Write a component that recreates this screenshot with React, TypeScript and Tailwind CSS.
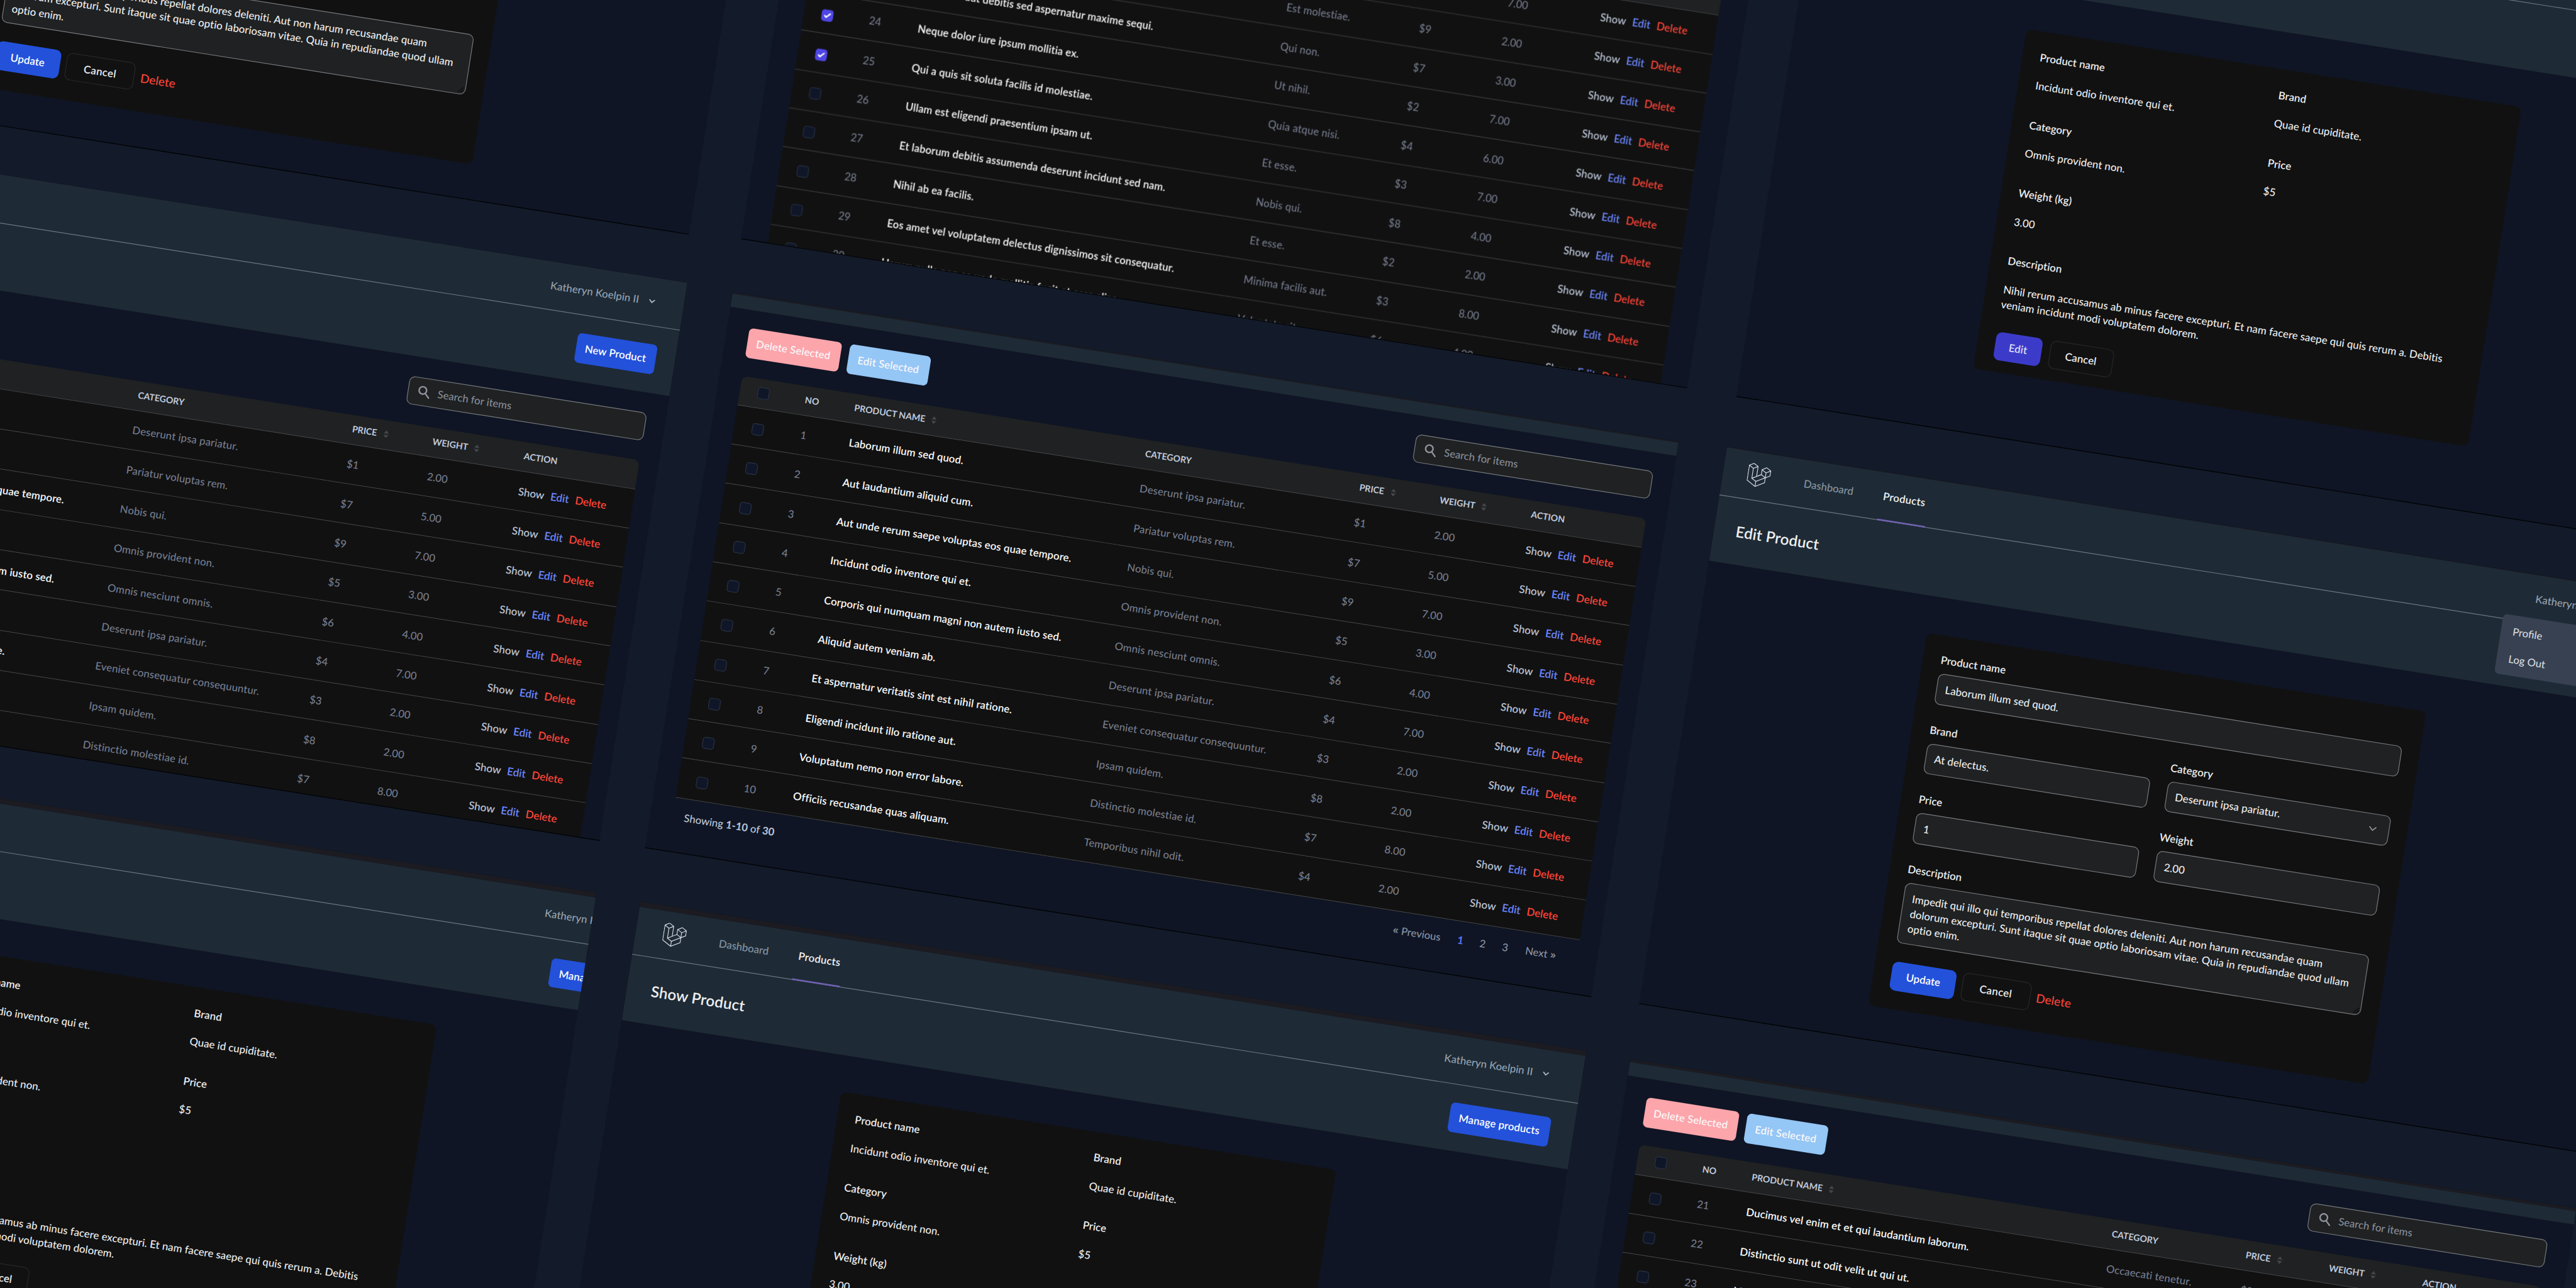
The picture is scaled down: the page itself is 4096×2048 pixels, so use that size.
import type { ReactNode } from "react";

type Product = {
  no: number;
  name: string;
  category: string;
  price: string;
  weight: string;
  checked?: boolean;
};

const firstPage: Product[] = [
  { no: 1, name: "Laborum illum sed quod.", category: "Deserunt ipsa pariatur.", price: "$1", weight: "2.00" },
  { no: 2, name: "Aut laudantium aliquid cum.", category: "Pariatur voluptas rem.", price: "$7", weight: "5.00" },
  { no: 3, name: "Aut unde rerum saepe voluptas eos quae tempore.", category: "Nobis qui.", price: "$9", weight: "7.00" },
  { no: 4, name: "Incidunt odio inventore qui et.", category: "Omnis provident non.", price: "$5", weight: "3.00" },
  { no: 5, name: "Corporis qui numquam magni non autem iusto sed.", category: "Omnis nesciunt omnis.", price: "$6", weight: "4.00" },
  { no: 6, name: "Aliquid autem veniam ab.", category: "Deserunt ipsa pariatur.", price: "$4", weight: "7.00" },
  { no: 7, name: "Et aspernatur veritatis sint est nihil ratione.", category: "Eveniet consequatur consequuntur.", price: "$3", weight: "2.00" },
  { no: 8, name: "Eligendi incidunt illo ratione aut.", category: "Ipsam quidem.", price: "$8", weight: "2.00" },
  { no: 9, name: "Voluptatum nemo non error labore.", category: "Distinctio molestiae id.", price: "$7", weight: "8.00" },
  { no: 10, name: "Officiis recusandae quas aliquam.", category: "Temporibus nihil odit.", price: "$4", weight: "2.00" },
];

const lastPage: Product[] = [
  { no: 21, name: "Ducimus vel enim et et qui laudantium laborum.", category: "Occaecati tenetur.", price: "$9", weight: "7.00" },
  { no: 22, name: "Distinctio sunt ut odit velit ut qui ut.", category: "Est molestiae.", price: "$9", weight: "2.00" },
  { no: 23, name: "Veritatis aut debitis sed aspernatur maxime sequi.", category: "Qui non.", price: "$7", weight: "3.00" },
  { no: 24, name: "Neque dolor iure ipsum mollitia ex.", category: "Ut nihil.", price: "$2", weight: "7.00" },
  { no: 25, name: "Qui a quis sit soluta facilis id molestiae.", category: "Quia atque nisi.", price: "$4", weight: "6.00" },
  { no: 26, name: "Ullam est eligendi praesentium ipsam ut.", category: "Et esse.", price: "$3", weight: "7.00" },
  { no: 27, name: "Et laborum debitis assumenda deserunt incidunt sed nam.", category: "Nobis qui.", price: "$8", weight: "4.00" },
  { no: 28, name: "Nihil ab ea facilis.", category: "Et esse.", price: "$2", weight: "2.00" },
  { no: 29, name: "Eos amet vel voluptatem delectus dignissimos sit consequatur.", category: "Minima facilis aut.", price: "$3", weight: "8.00" },
  { no: 30, name: "Harum nulla non ea unde mollitia fugit et esse alias.", category: "Voluptate sit.", price: "$6", weight: "4.00" },
];

const selectedPage = lastPage.map((p) => ({ ...p, checked: p.no === 24 || p.no === 25 }));

function Logo() {
  return (
    <svg viewBox="0 0 50 52" className="h-[32px] w-[31px] fill-[#d5dbe4]">
      <path d="M49.626 11.564a.809.809 0 0 1 .028.209v10.972a.8.8 0 0 1-.402.694l-9.209 5.302V39.25c0 .286-.152.55-.4.694L20.42 51.01c-.044.025-.092.041-.14.058-.018.006-.035.017-.054.022a.805.805 0 0 1-.41 0c-.022-.006-.042-.018-.063-.026-.044-.016-.09-.03-.132-.054L.402 39.944A.801.801 0 0 1 0 39.25V6.334c0-.072.01-.142.028-.21.006-.023.02-.044.028-.067.015-.042.029-.085.051-.124.015-.026.037-.047.055-.071.023-.032.044-.065.071-.093.023-.023.053-.04.079-.06.029-.024.055-.05.088-.069h.001l9.61-5.533a.802.802 0 0 1 .8 0l9.61 5.533h.002c.032.02.059.045.088.068.026.02.055.038.078.06.028.029.048.062.072.094.017.024.04.045.054.071.023.04.036.082.052.124.008.023.022.044.028.068a.809.809 0 0 1 .028.209v20.559l8.008-4.611v-10.51c0-.07.01-.141.028-.208.007-.024.02-.045.028-.068.016-.042.03-.085.052-.124.015-.026.037-.047.054-.071.024-.032.044-.065.072-.093.023-.023.052-.04.078-.06.03-.024.056-.05.088-.069h.001l9.611-5.533a.801.801 0 0 1 .8 0l9.61 5.533c.034.02.06.045.09.068.025.02.054.038.077.06.028.029.048.062.072.094.018.024.04.045.054.071.023.039.036.082.052.124.009.023.022.044.028.068zm-1.574 10.718v-9.124l-3.363 1.936-4.646 2.675v9.124l8.01-4.611zm-9.61 16.505v-9.13l-4.57 2.61-13.05 7.448v9.216l17.62-10.144zM1.602 7.719v31.068L19.22 48.93v-9.214l-9.204-5.209-.003-.002-.004-.002c-.031-.018-.057-.044-.086-.066-.025-.02-.054-.036-.076-.058l-.002-.003c-.026-.025-.044-.056-.066-.084-.02-.027-.044-.05-.06-.078l-.001-.003c-.018-.03-.029-.066-.042-.1-.013-.03-.03-.058-.038-.09v-.001c-.01-.038-.012-.078-.016-.117-.004-.03-.012-.06-.012-.09v-.002-21.481L4.965 9.654 1.602 7.72zm8.81-5.994L2.405 6.334l8.005 4.609 8.006-4.61-8.006-4.608zm4.164 28.764l4.645-2.674V7.719l-3.363 1.936-4.646 2.675v20.096l3.364-1.937zM39.243 7.164l-8.006 4.609 8.006 4.609 8.005-4.61-8.005-4.608zm-.801 10.605l-4.646-2.675-3.363-1.936v9.124l4.645 2.674 3.364 1.937v-9.124zM20.02 38.33l11.743-6.704 5.87-3.35-8-4.606-9.211 5.303-8.395 4.833 7.993 4.524z" />
    </svg>
  );
}

function Chevron() {
  return (
    <svg viewBox="0 0 20 20" className="h-[16px] w-[16px] fill-[#a9b2bf]">
      <path
        fillRule="evenodd"
        clipRule="evenodd"
        d="M5.293 7.293a1 1 0 011.414 0L10 10.586l3.293-3.293a1 1 0 111.414 1.414l-4 4a1 1 0 01-1.414 0l-4-4a1 1 0 010-1.414z"
      />
    </svg>
  );
}

function SortIcon() {
  return (
    <svg viewBox="0 0 8 12" className="ml-[7.5px] h-[11.5px] w-[9px] fill-[#43464a]">
      <path d="M4 0.5 L7.6 5 H0.4 Z M4 11.5 L0.4 7 H7.6 Z" />
    </svg>
  );
}

function Checkbox({ checked }: { checked?: boolean }) {
  if (checked) {
    return (
      <div className="flex h-[16px] w-[16px] items-center justify-center rounded-[4px] bg-[#4f46e5]">
        <svg viewBox="0 0 16 16" className="h-[16px] w-[16px] fill-white">
          <path d="M12.207 4.793a1 1 0 010 1.414l-5 5a1 1 0 01-1.414 0l-2-2a1 1 0 011.414-1.414L6.5 9.086l4.293-4.293a1 1 0 011.414 0z" />
        </svg>
      </div>
    );
  }
  return <div className="h-[16px] w-[16px] rounded-[4px] border border-[#293245] bg-[#0f1627]" />;
}

const columnsFirst = "grid grid-cols-[89px_67px_395px_291px_109px_124px_1fr] items-center";
const columnsLast = "grid grid-cols-[89px_67px_489px_182px_113px_127px_1fr] items-center";

function ProductTable({ rows, columns }: { rows: Product[]; columns: string }) {
  return (
    <div className="flex flex-col overflow-hidden rounded-t-[8px]">
      <div className="h-[40.3px] border-b border-[#434446] bg-[#1f2122] text-[12px] font-bold text-[#c0c9dc]">
        <div className={columns + " h-full"}>
          <div className="pl-[24px]"><Checkbox /></div>
          <div>NO</div>
          <div className="flex items-center">PRODUCT NAME<SortIcon /></div>
          <div>CATEGORY</div>
          <div className="flex items-center">PRICE<SortIcon /></div>
          <div className="flex items-center">WEIGHT<SortIcon /></div>
          <div>ACTION</div>
        </div>
      </div>
      {rows.map((p) => (
        <div key={p.no} className="h-[53.3px] border-b border-[#434446] bg-[#111111] text-[#757c8e]">
          <div className={columns + " h-full"}>
            <div className="pt-[4px] pl-[24px]"><Checkbox checked={p.checked} /></div>
            <div className={p.no < 10 ? "pl-[1px]" : ""}>{p.no}</div>
            <div className="pt-[1px] text-[14.2px] font-semibold tracking-[0.1px] text-[#fafafa]">{p.name}</div>
            <div className="pt-[1px] tracking-[0.13px]">{p.category}</div>
            <div className="pt-[1px]">{p.price}</div>
            <div className="pt-[1px]">{p.weight}</div>
            <div className="flex gap-[8.5px] pt-[1.5px] text-[14.4px] font-semibold">
              <span className="text-[#b6bfcf]">Show</span>
              <span className="text-[#6b86fb]">Edit</span>
              <span className="text-[#fb4438]">Delete</span>
            </div>
          </div>
        </div>
      ))}
    </div>
  );
}

function TableToolbar({ bulk }: { bulk: boolean }) {
  return (
    <div className="mb-[24.5px] flex h-[40px] items-center">
      {bulk && (
        <div className="flex gap-[11px] text-[14px] font-semibold tracking-[0.2px] text-[#fbf6f7]">
          <div className="flex h-[40px] w-[126px] items-center justify-center rounded-[6px] bg-[#fca5ab]">Delete Selected</div>
          <div className="flex h-[40px] w-[110px] items-center justify-center rounded-[6px] bg-[#94c6f6]">Edit Selected</div>
        </div>
      )}
      <div className="ml-auto flex h-[37.5px] w-[322.5px] items-center rounded-[8px] border border-[#76797d] bg-[#1f2122] pl-[11px] text-[#868c98]">
        <svg viewBox="0 0 20 20" className="mr-[9px] h-[20px] w-[20px] fill-[#8e939d]">
          <path
            fillRule="evenodd"
            clipRule="evenodd"
            d="M8 4a4 4 0 100 8 4 4 0 000-8zM2 8a6 6 0 1110.89 3.476l4.817 4.817a1 1 0 01-1.414 1.414l-4.816-4.816A6 6 0 012 8z"
          />
        </svg>
        Search for items
      </div>
    </div>
  );
}

function Pagination() {
  return (
    <div className="flex h-[51px] items-center text-[#8a92a2]">
      <div className="ml-[16px] text-[#bcc5d8]">
        Showing <b className="font-bold">1-10</b> of <b className="font-bold">30</b>
      </div>
      <div className="ml-auto mr-[27px] flex items-center">
        <span className="w-[77px]">
          <span className="font-['Figtree','Open_Sans',sans-serif]">«</span> Previous
        </span>
        <span className="w-[30px] text-center font-bold text-[#5b78f5]">1</span>
        <span className="w-[30px] text-center">2</span>
        <span className="w-[31px] text-center">3</span>
        <span className="ml-[12px] w-[43px] whitespace-nowrap">
          Next <span className="font-['Figtree','Open_Sans',sans-serif]">»</span>
        </span>
      </div>
    </div>
  );
}

function Header({ title, action, inset }: { title: string; action?: ReactNode; inset: string }) {
  return (
    <div className="flex flex-col bg-[#1e2a35]">
      <div className="h-[64.5px] border-b border-[#6b7782]">
        <div className={"flex h-full items-center " + inset}>
          <div className="-mt-[2px] ml-[4.5px]"><Logo /></div>
          <div className="ml-[45.5px] w-[104px] text-[#8795a3]">Dashboard</div>
          <div className="-mb-[2.5px] flex h-full w-[65px] items-center justify-center border-b-2 border-[#6f61b4] font-semibold tracking-[0.2px] text-[#f1f3f5]">
            Products
          </div>
          <div className="ml-auto mr-[8.5px] flex items-center gap-[9.5px] text-[#98a3b0]">
            <span className="whitespace-nowrap tracking-[0.05px]">Katheryn Koelpin II</span>
            <Chevron />
          </div>
        </div>
      </div>
      <div className="h-[89px]">
        <div className={"flex h-full items-center justify-between " + inset}>
          <div className="ml-[1px] text-[20.4px] font-semibold tracking-[0.1px] text-[#eceef0]">{title}</div>
          {action}
        </div>
      </div>
    </div>
  );
}

function Screen({ className, children }: { className: string; children: ReactNode }) {
  return (
    <div className={"flex shrink-0 flex-col overflow-hidden border-b border-black bg-[#0f1524] " + className}>
      {children}
    </div>
  );
}

function Field({ label, value }: { label: string; value: string }) {
  return (
    <div className="flex h-[92.3px] flex-col gap-[18.5px]">
      <div className="leading-[20px] font-semibold">{label}</div>
      <div className="leading-[20px]">{value}</div>
    </div>
  );
}

function ShowCard() {
  return (
    <div className="flex h-[460.5px] w-[672px] flex-col rounded-[8px] bg-[#111111] px-[24px] pt-[24.5px] text-[14.2px] tracking-[0.05px] text-[#ededee]">
      <div className="grid grid-cols-[324px_1fr]">
        <Field label="Product name" value="Incidunt odio inventore qui et." />
        <Field label="Brand" value="Quae id cupiditate." />
        <Field label="Category" value="Omnis provident non." />
        <Field label="Price" value="$5" />
        <Field label="Weight (kg)" value="3.00" />
      </div>
      <div className="leading-[20px] font-semibold">Description</div>
      <div className="mt-[18.5px] whitespace-nowrap leading-[20.6px]">
        Nihil rerum accusamus ab minus facere excepturi. Et nam facere saepe qui quis rerum a. Debitis
        <br />
        veniam incidunt modi voluptatem dolorem.
      </div>
      <div className="mt-[26px] flex gap-[10.5px] font-semibold">
        <div className="flex h-[38px] w-[63.5px] items-center justify-center rounded-[8px] bg-[#3c3bc9] text-[#dcdcf6]">Edit</div>
        <div className="flex h-[37.5px] w-[86px] items-center justify-center rounded-[8px] border border-[#262728]">Cancel</div>
      </div>
    </div>
  );
}

function Input({ label, value, select }: { label: string; value: string; select?: boolean }) {
  return (
    <div className="flex flex-col">
      <div className="leading-[20px] font-semibold">{label}</div>
      <div className="mt-[8px] flex h-[41.5px] items-center justify-between rounded-[8px] border border-[#76797d] bg-[#1f2122] px-[11px]">
        {value}
        {select && (
          <svg viewBox="0 0 20 20" className="h-[21px] w-[21px] fill-none stroke-[#8b8f96] stroke-[1.5]">
            <path strokeLinecap="round" strokeLinejoin="round" d="M6 8l4 4 4-4" />
          </svg>
        )}
      </div>
    </div>
  );
}

function EditCard() {
  return (
    <div className="flex h-[506.5px] w-[678px] flex-col rounded-[8px] bg-[#111111] px-[24px] pt-[23.5px] text-[14.2px] tracking-[0.05px] text-[#ededee]">
      <Input label="Product name" value="Laborum illum sed quod." />
      <div className="mt-[25px] grid grid-cols-2 gap-x-[24px] gap-y-[25px]">
        <Input label="Brand" value="At delectus." />
        <Input label="Category" value="Deserunt ipsa pariatur." select />
        <Input label="Price" value="1" />
        <Input label="Weight" value="2.00" />
      </div>
      <div className="mt-[25px] leading-[20px] font-semibold">Description</div>
      <div className="relative mt-[8px] h-[82px] rounded-[8px] border border-[#76797d] bg-[#1f2122] px-[11px] pt-[10px] whitespace-nowrap leading-[20.4px]">
        Impedit qui illo qui temporibus repellat dolores deleniti. Aut non harum recusandae quam
        <br />
        dolorum excepturi. Sunt itaque sit quae optio laboriosam vitae. Quia in repudiandae quod ullam
        <br />
        optio enim.
        <svg viewBox="0 0 10 10" className="absolute right-[1px] bottom-[1px] h-[9px] w-[9px] stroke-[#08090a]">
          <path d="M1 9 L9 1 M5 9 L9 5" />
        </svg>
      </div>
      <div className="mt-[25px] flex items-center font-semibold">
        <div className="flex h-[39px] w-[87px] items-center justify-center rounded-[8px] bg-[#2351da] text-white">Update</div>
        <div className="ml-[8.5px] flex h-[37.5px] w-[93px] items-center justify-center rounded-[8px] border border-[#262728] tracking-[0.3px]">Cancel</div>
        <div className="ml-[8.5px] text-[16px] font-medium text-[#fb4438]">Delete</div>
      </div>
    </div>
  );
}

function ActionButton({ className, children }: { className: string; children: ReactNode }) {
  return (
    <div className={"flex h-[39.5px] items-center justify-center rounded-[6px] bg-[#2351da] font-semibold tracking-[0.1px] text-white " + className}>
      {children}
    </div>
  );
}

function LeftColumn() {
  return (
    <div className="flex w-[1285px] shrink-0 flex-col items-start">
      <Screen className="h-[766.5px] w-[1285px] pt-[212px] pl-[304.5px]">
        <EditCard />
      </Screen>
      <Screen className="mt-[64.5px] ml-[8px] h-[757.5px] w-[1285px]">
        <Header
          title="Products"
          inset="pl-[29px] pr-[26.5px]"
          action={<ActionButton className="w-[108px]">New Product</ActionButton>}
        />
        <div className="flex flex-col pt-[26.5px] pr-[26px] pl-[29.5px]">
          <TableToolbar bulk={false} />
          <ProductTable rows={firstPage} columns={columnsFirst} />
        </div>
      </Screen>
      <Screen className="mt-[69.7px] ml-[138px] h-[755px] w-[1162px]">
        <div className="h-[6.5px] shrink-0 bg-[#1b1b21]" />
        <div className="flex w-[1285px] flex-col">
          <Header
            title="Show Product"
            inset="pl-[32px] pr-[33px]"
            action={<ActionButton className="w-[135.5px]">Manage products</ActionButton>}
          />
          <div className="pt-[49px] pl-[306px]">
            <ShowCard />
          </div>
        </div>
      </Screen>
    </div>
  );
}

function MiddleColumn() {
  return (
    <div className="ml-[70px] flex w-[1285px] shrink-0 flex-col items-start">
      <Screen className="h-[762px] w-[1285px] pt-[222px] pl-[36px]">
        <div className="w-[1224.5px] origin-top-left scale-[0.99]">
          <ProductTable rows={selectedPage} columns={columnsLast} />
        </div>
      </Screen>
      <Screen className="mt-[71.5px] h-[755px] w-[1285px]">
        <div className="h-[2px] shrink-0 bg-[#1b1b21]" />
        <div className="h-[18px] shrink-0 bg-[#1e2a35]" />
        <div className="flex flex-col pt-[24.5px] pr-[27px] pl-[29.5px]">
          <TableToolbar bulk />
          <ProductTable rows={firstPage} columns={columnsFirst} />
          <Pagination />
        </div>
      </Screen>
      <Screen className="mt-[72.5px] ml-[5px] h-[755px] w-[1285px]">
        <div className="h-[7px] shrink-0 bg-[#1b1b21]" />
        <Header
          title="Show Product"
          inset="pl-[32px] pr-[32.5px]"
          action={<ActionButton className="w-[135.5px]">Manage products</ActionButton>}
        />
        <div className="pt-[49px] pl-[306px]">
          <ShowCard />
        </div>
      </Screen>
    </div>
  );
}

function RightColumn() {
  return (
    <div className="ml-[65px] flex w-[1285px] shrink-0 flex-col items-start">
      <Screen className="ml-[2px] h-[762.5px] w-[1285px]">
        <div className="h-[11.5px] shrink-0" />
        <Header title="Show Product" inset="pl-[32px] pr-[33px]" />
        <div className="pt-[50px] pl-[307.5px]">
          <ShowCard />
        </div>
      </Screen>
      <Screen className="relative mt-[68.5px] h-[757px] w-[1285px]">
        <div className="h-[1px] shrink-0 bg-[#1b1b21]" />
        <Header title="Edit Product" inset="pl-[28.5px] pr-[27.5px]" />
        <div className="pt-[50px] pl-[304px]">
          <EditCard />
        </div>
        <div className="absolute top-[59px] left-[1064px] flex w-[192px] flex-col rounded-[6px] bg-[#374151] py-[4px] pl-[16px] text-[#d3d8df]">
          <span className="leading-[36.5px]">Profile</span>
          <span className="leading-[36.5px]">Log Out</span>
        </div>
      </Screen>
      <Screen className="mt-[74.5px] h-[755px] w-[1285px]">
        <div className="h-[4px] shrink-0 bg-[#1b1b21]" />
        <div className="h-[18.4px] shrink-0 bg-[#1e2a35]" />
        <div className="flex flex-col pt-[25px] pr-[31px] pl-[29.5px]">
          <TableToolbar bulk />
          <ProductTable rows={lastPage} columns={columnsLast} />
        </div>
      </Screen>
    </div>
  );
}

export default function App() {
  return (
    <div className="flex h-[2048px] w-[4096px] items-start overflow-hidden bg-[#131a29]">
      <div className="flex origin-top-left [transform:scale(1.185185)_rotate(8.96deg)] font-['Lato',sans-serif] text-[14.1px] leading-[20px] font-medium">
        <div className="-mt-[600px] -ml-[323px] flex items-start">
          <LeftColumn />
          <MiddleColumn />
          <RightColumn />
        </div>
      </div>
    </div>
  );
}
